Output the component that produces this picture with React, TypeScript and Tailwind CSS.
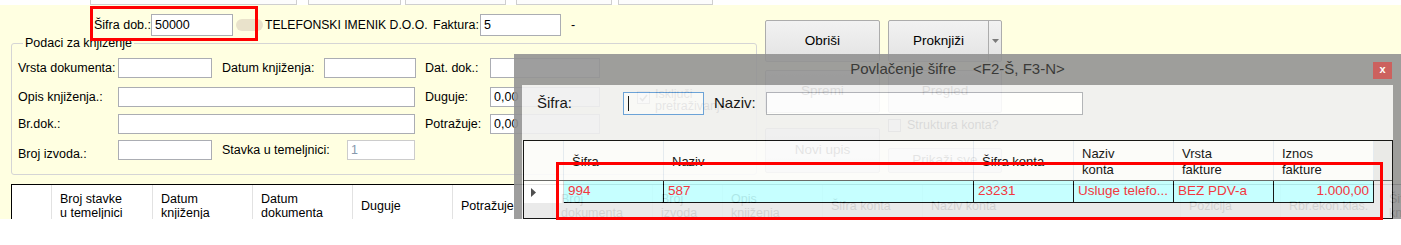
import type { ReactNode } from 'react';
import clsx from 'clsx';

type BoxProps = {
    className?: string,
    children?: ReactNode
}
function Box(props: BoxProps) {
    return (
        <div className={clsx("h-[20px] shrink-0 border border-[#abadb3] bg-white px-[3px] flex items-center", props.className)}>
            {props.children}
        </div>
    )
}

function Btn(props: BoxProps) {
    return (
        <div className={clsx("shrink-0 rounded-[2px] border border-[#acacac] bg-linear-to-b from-[#f2f2f2] to-[#e3e3e3] flex items-center justify-center text-[13.5px]", props.className)}>
            {props.children}
        </div>
    )
}

function Check(props: { checked?: boolean }) {
    return (
        <div className="w-[13px] h-[13px] shrink-0 border border-[#8e8f8f] bg-white flex items-center justify-center">
            {props.checked && (
                <svg width="9" height="8" viewBox="0 0 9 8">
                    <path d="M1 4 L3.5 6.5 L8 1" fill="none" stroke="#4d4d4d" strokeWidth="1.6" />
                </svg>
            )}
        </div>
    )
}

function TopStrip() {
    return (
        <div className="h-[5px] shrink-0 bg-white flex">
            <div className="ml-[90px] w-[207px] border-x border-b border-[#cfcfcf] bg-[#fcfcfc]" />
            <div className="ml-[11px] w-[93px] border-x border-b border-[#cfcfcf] bg-[#fcfcfc]" />
            <div className="ml-[4px] w-[101px] border-x border-b border-[#cfcfcf] bg-[#fcfcfc]" />
            <div className="ml-[10px] w-[96px] border-x border-b border-[#cfcfcf] bg-[#fcfcfc]" />
            <div className="ml-[6px] w-[95px] border-x border-b border-[#cfcfcf] bg-[#fcfcfc]" />
        </div>
    )
}

function LeftPanel() {
    return (
        <div className="w-[757px] shrink-0 flex flex-col">
            <div className="mt-[9px] h-[22px] flex items-center">
                <span className="ml-[94px] w-[57px]">Šifra dob.:</span>
                <Box className="h-[22px] w-[82px]">50000</Box>
                <div className="ml-[3px] w-[27px] h-[12px] rounded-full bg-[#e9e2cb]" />
                <span className="ml-[2px] w-[168px] text-[12.2px]">TELEFONSKI IMENIK D.O.O.</span>
                <span className="w-[47px]">Faktura:</span>
                <Box className="h-[22px] w-[81px]">5</Box>
                <span className="ml-[10px]">-</span>
            </div>
            <fieldset className="ml-[11px] w-[746px] h-[139px] border border-[#d5d5d5] rounded-[3px] pl-[6px]">
                <legend className="ml-[5px] px-[2px] leading-[15px]">Podaci za knjiženje</legend>
                <div className="mt-[7px] h-[20px] flex items-center">
                    <span className="w-[100px]">Vrsta dokumenta:</span>
                    <Box className="w-[94px]" />
                    <span className="ml-[10px] w-[102px]">Datum knjiženja:</span>
                    <Box className="w-[92px]" />
                    <span className="ml-[9px] w-[65px]">Dat. dok.:</span>
                    <Box className="w-[110px]" />
                </div>
                <div className="mt-[9px] h-[20px] flex items-center">
                    <span className="w-[100px]">Opis knjiženja.:</span>
                    <Box className="w-[297px]" />
                    <span className="ml-[10px] w-[65px]">Duguje:</span>
                    <Box className="w-[110px]">0,00</Box>
                    <div className="ml-[37px] self-start mt-[4px] flex items-start">
                        <Check checked />
                        <span className="ml-[5px] -mt-[3px] leading-[12px] text-[#333]">Isključi<br />pretraživanje</span>
                    </div>
                </div>
                <div className="mt-[7px] h-[20px] flex items-center">
                    <span className="w-[100px]">Br.dok.:</span>
                    <Box className="w-[297px]" />
                    <span className="ml-[10px] w-[65px]">Potražuje:</span>
                    <Box className="w-[110px]">0,00</Box>
                </div>
                <div className="mt-[6px] h-[20px] flex items-center">
                    <span className="w-[100px] pt-[8px]">Broj izvoda.:</span>
                    <Box className="w-[94px]" />
                    <span className="ml-[10px] w-[125px]">Stavka u temeljnici:</span>
                    <Box className="w-[68px] border-[#cccccc] bg-[#fbfbf2] text-[#8799ad]">1</Box>
                </div>
            </fieldset>
        </div>
    )
}

function RightButtons() {
    return (
        <div className="ml-[8px] flex gap-[8px]">
            <div className="w-[115px] flex flex-col">
                <Btn className="mt-[15px] h-[42px]">Obriši</Btn>
                <Btn className="mt-[8px] h-[43px]">Spremi</Btn>
                <Btn className="mt-[15px] h-[45px]">Novi upis</Btn>
            </div>
            <div className="w-[114px] flex flex-col">
                <Btn className="mt-[15px] h-[42px] justify-start">
                    <span className="w-[99px] text-center">Proknjiži</span>
                    <div className="h-full border-l border-[#acacac] flex-1 flex items-center justify-center">
                        <svg width="7" height="4" viewBox="0 0 7 4">
                            <path d="M0 0 L7 0 L3.5 4 Z" fill="#7a7a7a" />
                        </svg>
                    </div>
                </Btn>
                <Btn className="mt-[8px] h-[43px]">Pregled</Btn>
                <div className="mt-[6px] h-[13px] flex items-center">
                    <Check />
                    <span className="ml-[6px]">Struktura konta?</span>
                </div>
                <Btn className="mt-[16px] h-[25px]">Prikaži sve</Btn>
            </div>
        </div>
    )
}

const lowerColumns: { w: string, label: ReactNode }[] = [
    { w: "w-[40px]", label: "" },
    { w: "w-[101px]", label: <>Broj stavke<br />u temeljnici</> },
    { w: "w-[100px]", label: <>Datum<br />knjiženja</> },
    { w: "w-[100px]", label: <>Datum<br />dokumenta</> },
    { w: "w-[100px]", label: "Duguje" },
    { w: "w-[100px]", label: "Potražuje" },
    { w: "w-[100px]", label: <>Broj<br />dokumenta</> },
    { w: "w-[70px]", label: <>Broj<br />izvoda</> },
    { w: "w-[100px]", label: <>Opis<br />knjiženja</> },
    { w: "w-[100px]", label: "Šifra konta" },
    { w: "w-[258px]", label: "Naziv konta" },
    { w: "w-[100px]", label: "Pozicija" },
    { w: "w-[100px]", label: "Rbr.ekon.klas." },
    { w: "w-[100px]", label: <>Šifra<br />knjiženja</> },
]

function LowerGrid() {
    return (
        <div className="ml-[11px] h-[42px] shrink-0 border-t border-l border-black bg-white flex">
            {lowerColumns.map((c, i) => (
                <div key={i} className={clsx(c.w, "shrink-0 h-full border-r border-[#e2e2e2] pl-[8px] flex items-center leading-[14px]")}>
                    <span>{c.label}</span>
                </div>
            ))}
        </div>
    )
}

const dialogColumns: { w: string, label: ReactNode, value: string, right?: boolean }[] = [
    { w: "w-[100px]", label: "Šifra", value: "994" },
    { w: "w-[310px]", label: "Naziv", value: "587" },
    { w: "w-[100px]", label: "Šifra konta", value: "23231" },
    { w: "w-[100px]", label: <>Naziv<br />konta</>, value: "Usluge telefo..." },
    { w: "w-[100px]", label: <>Vrsta<br />fakture</>, value: "BEZ PDV-a" },
    { w: "w-[100px]", label: <>Iznos<br />fakture</>, value: "1.000,00", right: true },
]

function Dialog() {
    return (
        <div className="absolute left-[514px] top-[54px] w-[887px] h-[165px] opacity-90 bg-[#949494] flex flex-col">
            <div className="h-[31px] shrink-0 grid grid-cols-[1fr_auto_1fr] items-center">
                <div />
                <div className="text-[15px] text-[#262626] flex gap-[17px]">
                    <span>Povlačenje šifre</span>
                    <span>&lt;F2-Š, F3-N&gt;</span>
                </div>
                <div className="flex justify-end pr-[9px] self-start pt-[8px]">
                    <div className="w-[19px] h-[17px] bg-[#c75050] flex items-center justify-center text-white text-[11px] font-bold leading-none pb-[2px]">x</div>
                </div>
            </div>
            <div className="mx-[8px] flex-1 bg-[#f0f0f0] flex flex-col min-h-0">
                <div className="mt-[7px] h-[23px] flex items-center text-[15px]">
                    <span className="ml-[15px] w-[86px]">Šifra:</span>
                    <div className="w-[81px] h-[23px] border border-[#5d9ad6] bg-white/60 flex items-center pl-[4px]">
                        <div className="w-[1px] h-[15px] bg-black" />
                    </div>
                    <span className="ml-[10px] w-[52px]">Naziv:</span>
                    <div className="w-[317px] h-[23px] border border-[#abadb3] bg-white" />
                </div>
                <div className="mt-[25px] ml-[1px] flex-1 border border-black bg-[#e8e8e8] flex flex-col">
                    <div className="h-[39px] shrink-0 flex text-[13px]">
                        <div className="w-[40px] shrink-0 bg-[#fcfcfc] border-r border-[#e3e9f1]" />
                        {dialogColumns.map((c, i) => (
                            <div key={i} className={clsx(c.w, "shrink-0 bg-[#fcfcfc] border-r border-[#e3e9f1] pl-[8px] flex items-center leading-[16px]")}>
                                <span className="pt-[2px]">{c.label}</span>
                            </div>
                        ))}
                    </div>
                    <div className="h-[23px] shrink-0 flex border-t border-[#5a5a5a] text-[13.5px] text-[#f2222a]">
                        <div className="w-[40px] shrink-0 bg-white border-r border-[#d5d5d5] pl-[7px] flex items-center">
                            <svg width="5" height="9" viewBox="0 0 5 9">
                                <path d="M0 0 L5 4.5 L0 9 Z" fill="#3c3c3c" />
                            </svg>
                        </div>
                        {dialogColumns.map((c, i) => (
                            <div key={i} className={clsx(c.w, "shrink-0 bg-[#c0ffff] border-r border-b border-black px-[4px] flex items-center whitespace-nowrap overflow-hidden", c.right && "justify-end")}>
                                {c.value}
                            </div>
                        ))}
                    </div>
                </div>
            </div>
        </div>
    )
}

export default function App() {
    return (
        <div className="relative w-[1401px] h-[245px] overflow-hidden bg-white font-['Liberation_Sans',Arial,sans-serif] text-[12.5px] text-black">
            <div className="h-[219px] flex flex-col overflow-hidden">
                <TopStrip />
                <div className="flex-1 min-h-0 bg-[#ffffe1] flex flex-col">
                    <div className="h-[179px] shrink-0 flex">
                        <LeftPanel />
                        <RightButtons />
                    </div>
                    <LowerGrid />
                </div>
            </div>
            <Dialog />
            <div className="absolute left-[90px] top-[6px] w-[168px] h-[35px] border-[3px] border-[#ff0000]" />
            <div className="absolute left-[556px] top-[162px] w-[827px] h-[58px] border-[3px] border-[#ff0000]" />
        </div>
    )
}
